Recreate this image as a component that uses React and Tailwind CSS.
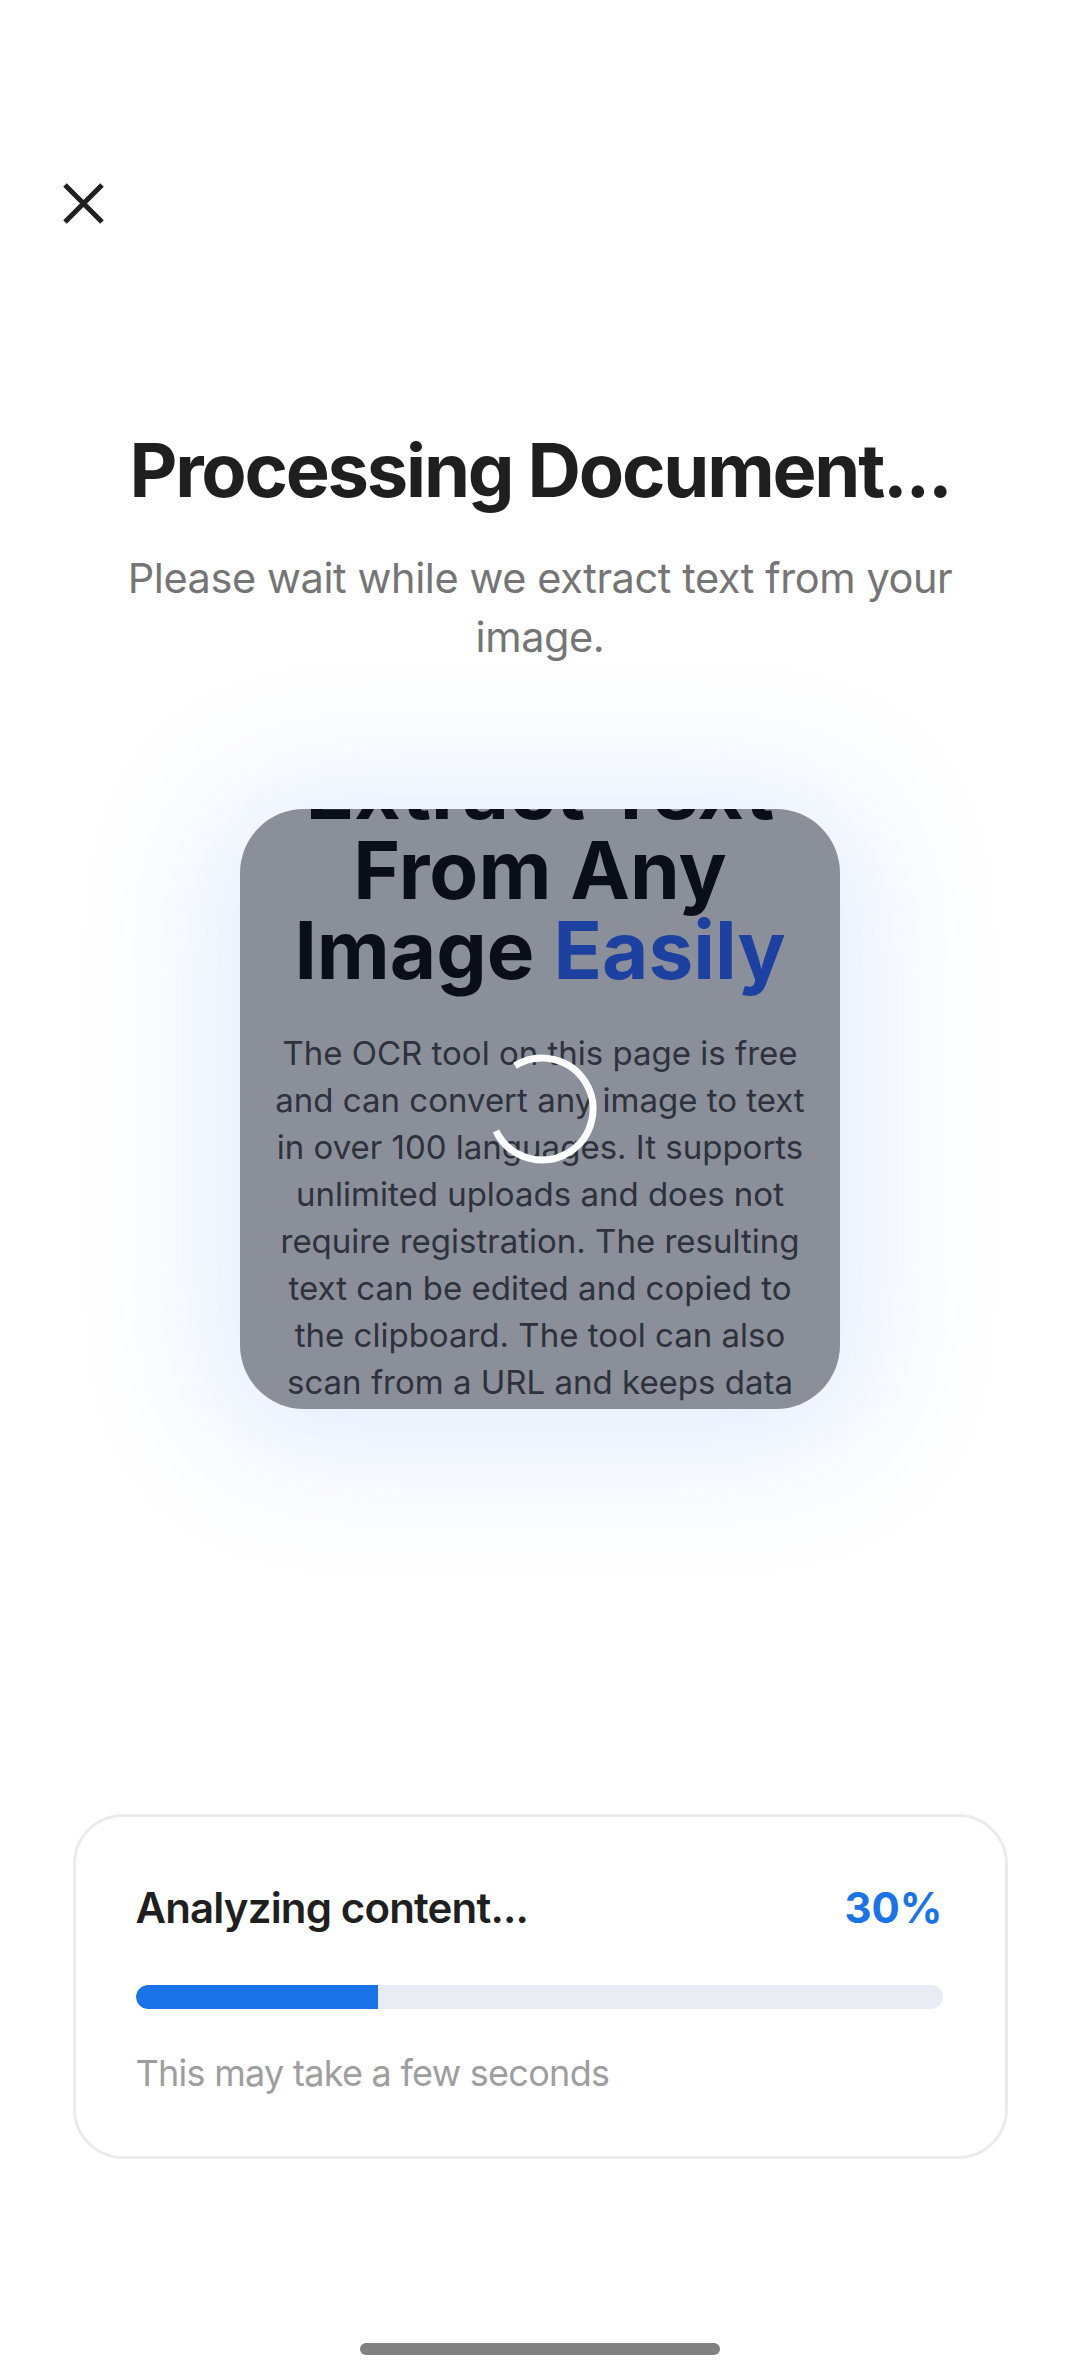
import React from "react";

const bodyLines = [
  "The OCR tool on this page is free",
  "and can convert any image to text",
  "in over 100 languages. It supports",
  "unlimited uploads and does not",
  "require registration. The resulting",
  "text can be edited and copied to",
  "the clipboard. The tool can also",
  "scan from a URL and keeps data",
];

const Spinner = () => {
  const r = 51;
  const c = 2 * Math.PI * r;
  const arc = c * (276 / 360);
  return (
    <svg width="110" height="110" viewBox="0 0 110 110">
      <circle
        cx="55"
        cy="55"
        r={r}
        fill="none"
        stroke="#ffffff"
        strokeWidth="7"
        strokeDasharray={`${arc} ${c - arc}`}
        transform="rotate(-122 55 55)"
      />
    </svg>
  );
};

const App = () => {
  const progress = 30;

  return (
    <div className="w-[1080px] h-[2376px] bg-white flex flex-col items-center font-['Inter','Noto_Sans',sans-serif] overflow-hidden">
      {/* close button */}
      <div className="self-start pl-[63px] pt-[183px]">
        <svg width="41" height="41" viewBox="0 0 41 41">
          <path d="M2 2 L39 39 M39 2 L2 39" stroke="#1f1f1f" strokeWidth="5" />
        </svg>
      </div>

      <h1 className="mt-[203px] text-[74px] leading-[86px] font-bold tracking-[-0.03em] text-[#1f1f1f] text-center">
        Processing Document...
      </h1>
      <p className="mt-[36px] text-[41.5px] leading-[59px] text-[#757575] text-center tracking-[-0.01em]">
        Please wait while we extract text from your
        <br />
        image.
      </p>

      {/* preview with glow */}
      <div className="mt-[142px] relative w-[600px] h-[600px] rounded-[64px] shadow-[0_10px_130px_40px_rgba(59,130,246,0.13)]">
        <div className="w-full h-full rounded-[64px] overflow-hidden bg-[#8a8f99] flex flex-col items-center">
          <div className="-mt-[59px] text-[80px] leading-[80px] font-bold text-[#0a0e18] text-center whitespace-nowrap">
            <div>Extract Text</div>
            <div>From Any</div>
            <div>
              Image <span className="text-[#1d41a0]">Easily</span>
            </div>
          </div>
          <div className="mt-[40px] text-[33px] leading-[47px] text-[#2d323c] text-center whitespace-nowrap">
            {bodyLines.map((l) => (
              <div key={l}>{l}</div>
            ))}
          </div>
        </div>
        <div className="absolute left-[247px] top-[245px]">
          <Spinner />
        </div>
      </div>

      {/* progress card */}
      <div className="mt-[405px] w-[935px] rounded-[50px] border-[3px] border-[#ebebeb] bg-white pl-[60px] pr-[62px] pt-[65px] pb-[61px]">
        <div className="flex items-center justify-between h-[52px]">
          <span className="text-[42px] leading-[52px] font-semibold tracking-[-0.02em] text-[#1f1f1f]">
            Analyzing content...
          </span>
          <span className="text-[42px] leading-[52px] font-bold text-[#1a73e8]">{progress}%</span>
        </div>
        <div className="mt-[51px] h-[24px] w-full rounded-full bg-[#e9edf3] overflow-hidden">
          <div className="h-full bg-[#1a73e8] rounded-l-full" style={{width: `${progress}%`}}></div>
        </div>
        <p className="mt-[42px] text-[36px] leading-[44px] text-[#9e9e9e] tracking-[-0.02em]">
          This may take a few seconds
        </p>
      </div>

      {/* home indicator */}
      <div className="mt-auto mb-[21px] w-[360px] h-[12px] rounded-full bg-[#808080]"></div>
    </div>
  );
};

export default App;
